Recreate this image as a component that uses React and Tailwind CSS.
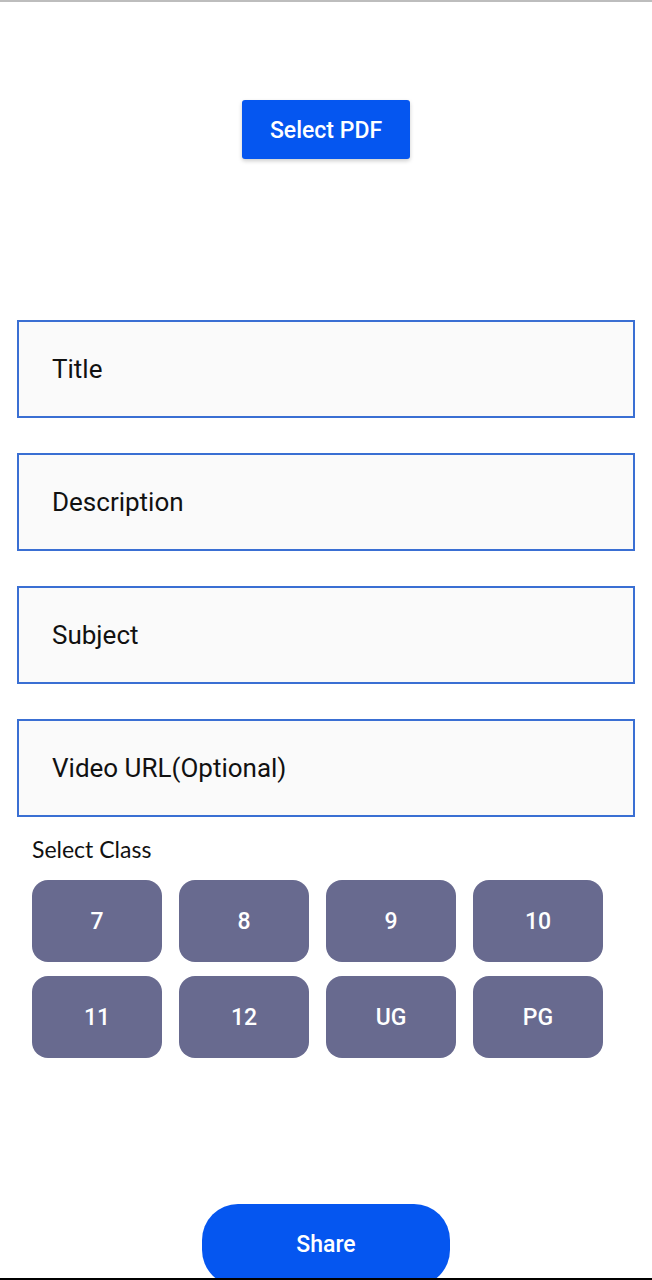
import React from "react";

const fields = ["Title", "Description", "Subject", "Video URL(Optional)"];
const classes = ["7", "8", "9", "10", "11", "12", "UG", "PG"];

const App = () => {
  return (
    <div className="relative h-[1280px] overflow-hidden bg-white font-['Roboto',sans-serif]">
      <div className="h-[2px] bg-[#bdbdbd]" />

      <div className="flex justify-center pt-[98px]">
        <button className="w-[168px] h-[59px] pt-[3px] rounded-[3px] bg-[#0556f0] text-white text-[23px] font-medium shadow-[0_2px_4px_rgba(0,0,0,0.2)]">
          Select PDF
        </button>
      </div>

      <div className="mt-[161px] mx-[17px] flex flex-col gap-[35px]">
        {fields.map((f) => (
          <div
            key={f}
            className="h-[98px] border-2 border-[#3a6fd3] bg-[#fafafa] flex items-center pl-[33px] text-[26px] text-[#111]"
          >
            {f}
          </div>
        ))}
      </div>

      <div className="ml-[32px] mt-[18px] text-[23px] leading-[28px] text-[#111] font-['Lato',sans-serif]">
        Select Class
      </div>

      <div className="ml-[32px] mt-[17px] grid grid-cols-[repeat(4,130px)] gap-x-[17px] gap-y-[14px]">
        {classes.map((c) => (
          <button
            key={c}
            className="h-[82px] pt-[3px] rounded-[16px] bg-[#686a8f] text-white text-[23px] font-medium"
          >
            {c}
          </button>
        ))}
      </div>

      <div className="flex justify-center mt-[146px]">
        <button className="w-[248px] h-[82px] pt-[1px] rounded-[36px] bg-[#0556f0] text-white text-[23px] font-medium">
          Share
        </button>
      </div>

      <div className="absolute left-0 right-0 bottom-0 h-[2px] bg-black" />
    </div>
  );
};

export default App;
